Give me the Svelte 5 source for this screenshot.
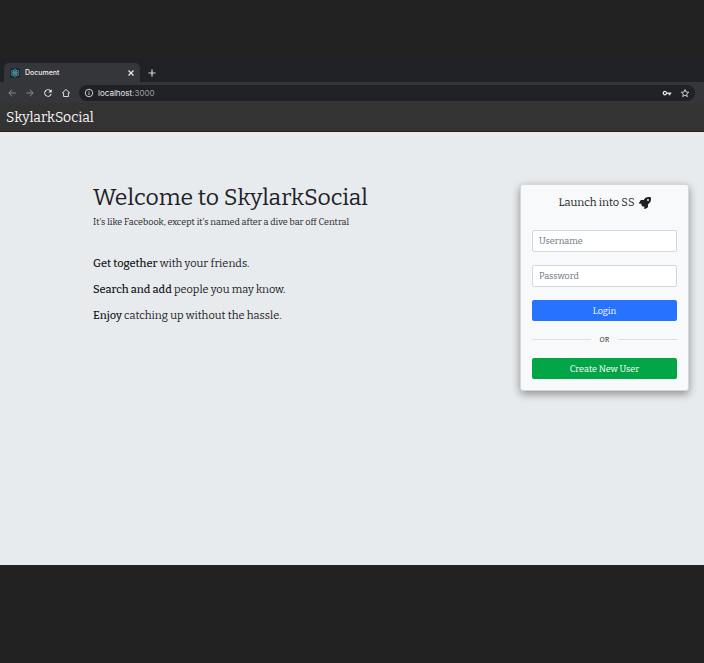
<script>
  let username = $state('');
  let password = $state('');
  const blurbs = [
    { lead: 'Get together', rest: 'with your friends.' },
    { lead: 'Search and add', rest: 'people you may know.' },
    { lead: 'Enjoy', rest: 'catching up without the hassle.' }
  ];
</script>

<div class="stage">
  <div class="window">
    <div class="tabs">
      <div class="tab">
        <svg class="favicon" viewBox="0 0 24 24" aria-hidden="true">
          <rect width="24" height="24" rx="4" fill="#20282d" />
          <g fill="none" stroke="#4596aa" stroke-width="1.7">
            <ellipse cx="12" cy="12" rx="10" ry="4" transform="rotate(90 12 12)" />
            <ellipse cx="12" cy="12" rx="10" ry="4" transform="rotate(30 12 12)" />
            <ellipse cx="12" cy="12" rx="10" ry="4" transform="rotate(150 12 12)" />
          </g>
          <circle cx="12" cy="12" r="2.2" fill="#4fb3cb" />
        </svg>
        <span class="tab-title">Document</span>
        <button class="icon" aria-label="Close tab">
          <svg class="close" viewBox="0 0 8 8"><path d="M1.5 1.5l5 5M6.5 1.5l-5 5" stroke="#e8eaed" stroke-width="1.2" /></svg>
        </button>
      </div>
      <button class="icon new-tab" aria-label="New tab">
        <svg viewBox="0 0 10 10"><path d="M5 1.5v7M1.5 5h7" stroke="#d5d7da" stroke-width="1.2" /></svg>
      </button>
    </div>

    <div class="toolbar">
      <button class="icon dim" aria-label="Back">
        <svg viewBox="0 0 24 24"><path d="M21 11H7l6-6-1.400-1.400L3.200 12l8.400 8.400L13 19l-6-6h14z" /></svg>
      </button>
      <button class="icon dim" aria-label="Forward">
        <svg viewBox="0 0 24 24"><path d="M3 11h14l-6-6 1.400-1.400 8.400 8.400-8.400 8.400L11 19l6-6H3z" /></svg>
      </button>
      <button class="icon" aria-label="Reload">
        <svg viewBox="0 0 24 24"><path d="M18.400 5.600A9 9 0 1 0 20.700 14.300h-2.600A6.500 6.500 0 1 1 16.600 7.400L13 11h8V3z" /></svg>
      </button>
      <button class="icon" aria-label="Home">
        <svg viewBox="0 0 24 24"><path d="M12 3.500L3.200 11.700h3V20.500h11.600v-8.800h3z" fill="none" stroke="currentColor" stroke-width="2.200" stroke-linejoin="round" /></svg>
      </button>
      <div class="address">
        <svg viewBox="0 0 24 24" aria-hidden="true">
          <circle cx="12" cy="12" r="9" fill="none" stroke="currentColor" stroke-width="2" />
          <path d="M11 11h2v6h-2zM11 7h2v2h-2z" />
        </svg>
        <span class="url">localhost<span class="port">:3000</span></span>
        <button class="icon" aria-label="Saved passwords">
          <svg viewBox="0 0 24 24"><path fill-rule="evenodd" d="M12.200 10.500a5.500 5.500 0 1 0 0 3.500H16v3.500h4V14h2.500v-3.500zM7 9.700a2.500 2.500 0 1 1 0 5 2.500 2.500 0 0 1 0-5z" /></svg>
        </button>
        <button class="icon" aria-label="Bookmark this page">
          <svg viewBox="0 0 24 24"><path d="M12 3.800l2.500 5.900 6.400.5-4.900 4.200 1.500 6.300-5.500-3.400-5.500 3.400L8 14.400l-4.900-4.200 6.400-.5z" fill="none" stroke="currentColor" stroke-width="2" /></svg>
        </button>
      </div>
    </div>

    <header><a class="brand" href="/">SkylarkSocial</a></header>

    <main>
      <section class="welcome">
        <h1>Welcome to SkylarkSocial</h1>
        <p class="tagline">It's like Facebook, except it's named after a dive bar off Central</p>
        {#each blurbs as blurb}
          <p class="blurb"><span class="lead">{blurb.lead}</span> {blurb.rest}</p>
        {/each}
      </section>

      <form class="card" onsubmit={(event) => event.preventDefault()}>
        <h2>
          Launch into SS
          <svg viewBox="0 0 512 512" aria-hidden="true">
            <path fill-rule="evenodd" d="M505 19c-1-7-6-11-12-12-31-7-56-7-80-7-103 0-165 55-211 128H95c-16 0-35 12-43 27L3 253c-8 15 2 35 21 35h104l-22 22c-13 13-13 33 0 45l51 51c12 12 32 12 45 0l22-22v104c0 19 20 29 35 21l98-49c15-8 27-27 27-43V310c73-46 128-108 128-211 0-24 0-49-7-80zM384 168a40 40 0 1 1 0-80 40 40 0 0 1 0 80z" />
          </svg>
        </h2>
        <input type="text" placeholder="Username" aria-label="Username" bind:value={username} />
        <input type="password" placeholder="Password" aria-label="Password" bind:value={password} />
        <button class="action login" type="submit">Login</button>
        <div class="divider"><span>OR</span></div>
        <button class="action create" type="button">Create New User</button>
      </form>
    </main>
  </div>
</div>

<style>
  :global(body) {
    margin: 0;
    background: #222;
  }
  .stage {
    box-sizing: border-box;
    min-height: 100vh;
    padding: 57px 0 98px;
    display: flex;
    flex-direction: column;
    background: #222;
  }
  .window {
    flex: 1;
    display: flex;
    flex-direction: column;
    background: #e7ebee;
    color: #1d2125;
    font-family: "Bitter", "DejaVu Serif Condensed", "DejaVu Serif", serif;
  }
  svg {
    display: block;
    width: 10px;
    height: 10px;
    fill: currentColor;
    flex: none;
  }
  button {
    border: 0;
    padding: 0;
    font-family: inherit;
    cursor: pointer;
  }
  .icon {
    background: none;
    color: #e8eaed;
  }
  .dim {
    color: #85878b;
  }
  .tabs {
    display: flex;
    align-items: flex-end;
    height: 25px;
    padding-left: 4px;
    background: #202124;
    font-family: Inter, Roboto, sans-serif;
  }
  .tab {
    box-sizing: border-box;
    display: flex;
    align-items: center;
    gap: 5px;
    width: 136px;
    height: 19px;
    padding: 0 5px 0 6px;
    border-radius: 5px 5px 0 0;
    background: #35363a;
    color: #eceef0;
    font-size: 7px;
    font-weight: 500;
  }
  .tab-title {
    flex: 1;
  }
  .close {
    width: 8px;
    height: 8px;
  }
  .new-tab {
    padding: 0 0 4px 7px;
  }
  .toolbar {
    display: flex;
    align-items: center;
    gap: 8px;
    height: 21px;
    padding: 0 9px 0 7px;
    background: #35363a;
    font-family: Inter, Roboto, sans-serif;
  }
  .address {
    flex: 1;
    display: flex;
    align-items: center;
    gap: 4px;
    height: 16px;
    padding: 0 5px;
    border-radius: 8px;
    background: #202124;
    color: #e8eaed;
    font-size: 8px;
  }
  .address .icon + .icon {
    margin-left: 4px;
  }
  .url {
    flex: 1;
  }
  .port {
    color: #9aa0a6;
  }
  header {
    box-sizing: border-box;
    height: 29px;
    padding-left: 6px;
    border-bottom: 1px solid #211e1f;
    background: #333;
    line-height: 28px;
  }
  .brand {
    color: #f5f5f5;
    font-size: 14px;
    text-decoration: none;
  }
  main {
    flex: 1;
    display: flex;
    align-items: flex-start;
    justify-content: space-between;
    padding: 52px 15px 52px 93px;
  }
  h1,
  h2,
  p {
    margin: 0;
    font-weight: 400;
  }
  h1 {
    font-size: 23px;
    line-height: 26px;
  }
  .tagline {
    margin: 3px 0 24px;
    font-size: 9px;
    line-height: 18px;
  }
  .blurb {
    margin-bottom: 8px;
    font-size: 11px;
    line-height: 18px;
  }
  .lead {
    color: #0f1215;
    font-weight: 500;
  }
  .card {
    box-sizing: border-box;
    display: flex;
    flex-direction: column;
    width: 169px;
    padding: 9px 11px 11px;
    border: 1px solid #d5d8db;
    border-radius: 3px;
    background: #f8f9fa;
    box-shadow: 0 3px 8px rgba(0, 0, 0, 0.4);
  }
  h2 {
    display: flex;
    justify-content: center;
    align-items: center;
    gap: 4px;
    margin-bottom: 18px;
    font-size: 11px;
    line-height: 18px;
  }
  h2 svg {
    width: 12px;
    height: 12px;
  }
  input {
    box-sizing: border-box;
    width: 100%;
    height: 22px;
    margin: 0 0 13px;
    padding: 0 6px;
    border: 1px solid #d3d9de;
    border-radius: 2px;
    background: #fff;
    color: #495057;
    font-family: inherit;
    font-size: 9px;
  }
  input::placeholder {
    color: #6c757d;
    opacity: 1;
  }
  .action {
    height: 21px;
    border-radius: 2px;
    color: #fff;
    font-size: 9px;
  }
  .login {
    background: #2773ff;
  }
  .create {
    background: #02a546;
  }
  .divider {
    display: flex;
    align-items: center;
    gap: 9px;
    height: 37px;
    font-size: 7px;
  }
  .divider::before,
  .divider::after {
    content: "";
    flex: 1;
    height: 1px;
    background: #dcdfe1;
  }
</style>
